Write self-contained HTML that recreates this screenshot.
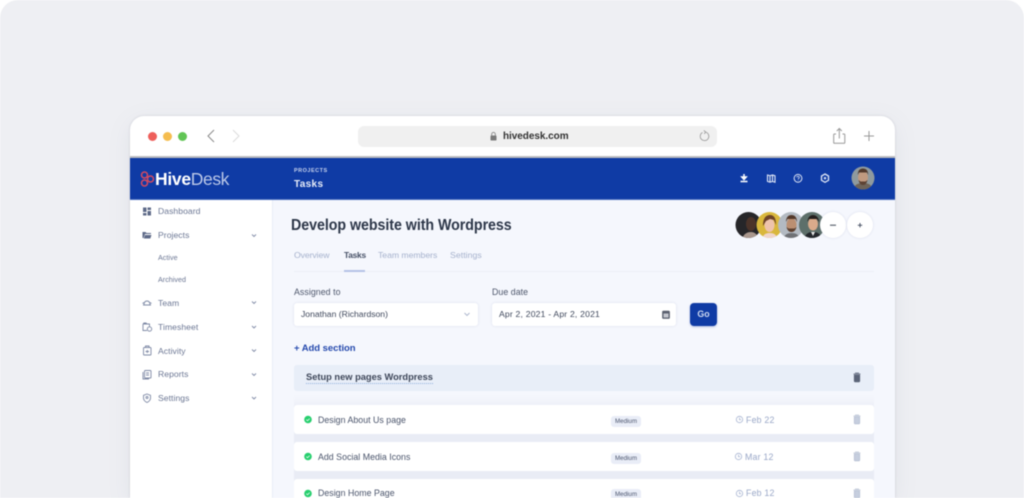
<!DOCTYPE html>
<html><head><meta charset="utf-8">
<style>
*{box-sizing:border-box}
html,body{margin:0;padding:0;width:1024px;height:498px;overflow:hidden;background:#fff}
body{font-family:"Liberation Sans",sans-serif;position:relative}
#wrap{position:absolute;left:0;top:0;width:1024px;height:498px;overflow:hidden;filter:blur(.4px)}
.a{position:absolute;white-space:nowrap}
#bg{left:0;top:0;width:1024px;height:498px;background:#eeeff3;border-radius:18px 18px 0 0}
#win{left:130px;top:116px;width:765px;height:382px;background:#fff;border-radius:14px 14px 0 0;box-shadow:0 0 2px rgba(90,90,110,.22),0 6px 24px rgba(120,125,150,.1);overflow:hidden}
.t{line-height:12px;transform:translateY(-50%)}
.side{font-size:8.6px;color:#6c7794;letter-spacing:.05px}
.sub{font-size:7.2px;color:#6c7794}
.tab{font-size:8.7px;color:#a6b2cd;letter-spacing:0}
.row{left:294px;width:580px;background:#fff;border-radius:3px}
.rt{font-size:8.8px;color:#4a546b;letter-spacing:.02px}
.badge{left:611px;width:30px;background:#e9edf7;border-radius:3px;font-size:6.2px;color:#4d5770;text-align:center;line-height:11px;overflow:hidden}
.date{font-size:8.8px;color:#9aa8c8;letter-spacing:.2px}
.inp{top:303px;width:184px;height:23px;background:#fff;border-radius:3px;box-shadow:0 0 2px rgba(130,140,180,.25);font-size:8.6px;color:#3f485c;line-height:23px;padding-left:7px;letter-spacing:.2px}
svg{position:absolute;overflow:hidden}
</style></head><body>
<div id="wrap">
<div class="a" id="bg"></div>
<div class="a" id="win"></div>

<!-- browser chrome -->
<div class="a" style="left:147.500px;top:131.500px;width:9px;height:9px;border-radius:50%;background:#ee5f5b"></div>
<div class="a" style="left:162.500px;top:131.500px;width:9px;height:9px;border-radius:50%;background:#f5bd4f"></div>
<div class="a" style="left:177.500px;top:131.500px;width:9px;height:9px;border-radius:50%;background:#61c555"></div>
<svg style="left:0;top:0" width="1024" height="498" fill="none">
<path d="M214 130l-6 6 6 6" stroke="#8a8a8a" stroke-width="1"/>
<path d="M233 130l6 6-6 6" stroke="#dcdcdc" stroke-width="1"/>
<path d="M836 134h-1.500a.8 .8 0 0 0-.8 .8v7.700a.8 .8 0 0 0 .8 .8h9.500a.8 .8 0 0 0 .8-.8v-7.700a.8 .8 0 0 0-.8-.8h-1.500M839.300 138.500v-9.500M836.800 131l2.500-2.500 2.500 2.500" stroke="#999" stroke-width="1"/>
<path d="M869 131v10M864 136h10" stroke="#999" stroke-width="1"/>
</svg>
<div class="a" style="left:358px;top:126px;width:359px;height:21px;background:#f0f0f0;border-radius:6px"></div>
<svg style="left:0;top:0" width="1024" height="498" fill="none">
<path d="M702.500 132.500a4.300 4.300 0 1 0 3 -.4M703.800 130.500l2 1.500-1.600 1.800" stroke="#979797" stroke-width=".8"/>
<rect x="490.500" y="135.500" width="6" height="5" rx=".8" fill="#7a7a7a"/>
<path d="M491.700 135.500v-1.300a1.800 1.800 0 0 1 3.600 0v1.300" stroke="#7a7a7a" stroke-width=".8"/>
</svg>
<div class="a t" style="left:503px;top:137px;font-size:10px;font-weight:700;color:#333;letter-spacing:-.05px">hivedesk.com</div>

<!-- header -->
<div class="a" style="left:130px;top:156px;width:765px;height:2px;background:#bdbdc0"></div>
<div class="a" style="left:130px;top:158px;width:765px;height:42px;background:#0f3ba5"></div>
<div class="a" style="left:130px;top:199px;width:765px;height:1px;background:#4a6fc0"></div>
<svg style="left:0;top:0" width="1024" height="498" fill="none">
<g stroke="#d84a5f" stroke-width="1.500"><circle cx="144.500" cy="175" r="3"/><circle cx="144.500" cy="183" r="3"/><circle cx="150.500" cy="179" r="3"/></g>
</svg>
<div class="a t" style="left:155px;top:179px;font-size:17.500px;font-weight:700;color:#fff;letter-spacing:-.3px;line-height:20px">Hive<span style="font-weight:400;color:#bcc9e8;letter-spacing:-.4px">Desk</span></div>
<div class="a t" style="left:294px;top:170.500px;font-size:5.500px;font-weight:700;color:#c9d4ee;letter-spacing:.5px">PROJECTS</div>
<div class="a t" style="left:294px;top:184.500px;font-size:10px;font-weight:700;color:#e8edf8;letter-spacing:.35px">Tasks</div>
<svg style="left:0;top:0" width="1024" height="498" fill="none">
<path d="M744 174v4M741.800 177h4.400L744 179.500zM740.500 181.500h7" stroke="#fff" stroke-width="1.500"/>
<path d="M767.500 175l2.500 .8 2.500-.8 2.500 .8v6.400l-2.500-.8-2.500 .8-2.500-.8zM770 175.800v6.400M772.500 175v6.400" stroke="#dfe6f6" stroke-width="1.100"/>
<circle cx="798" cy="178.300" r="3.900" stroke="#dfe6f6" stroke-width="1"/>
<path d="M796.800 177.300a1.200 1.200 0 1 1 1.500 1.300v.6M798.200 180v.5" stroke="#dfe6f6" stroke-width=".8"/>
<path d="M825 174l3.500 2v4.300l-3.500 2-3.500-2V176z" stroke="#dfe6f6" stroke-width="1.300"/>
<circle cx="825" cy="178.200" r="1.200" fill="#dfe6f6"/>
<!-- header avatar -->
<circle cx="863" cy="178" r="11.500" fill="#8f9a9e"/>
<path d="M855 186.300c1-2.500 4-3 8-3s7 .5 8 3a11.500 11.500 0 0 1-16 0z" fill="#6e6459"/>
<ellipse cx="863" cy="177.500" rx="5" ry="6.500" fill="#c09a80"/>
<path d="M857.800 175c0-5 2.500-6.500 5.200-6.500s5.200 1.500 5.200 6.500l-1.200-2.500h-8z" fill="#51392c"/>
<path d="M858.500 180c1 4 2.500 5 4.500 5s3.500-1 4.500-5l-2 1.500h-5z" fill="#5d4334"/>
</svg>

<!-- sidebar + content -->
<div class="a" style="left:130px;top:200px;width:142px;height:298px;background:#fff"></div>
<div class="a" style="left:272px;top:200px;width:1px;height:298px;background:#e9edf7"></div>
<div class="a" style="left:273px;top:200px;width:622px;height:298px;background:#f5f7fd"></div>

<svg style="left:0;top:0" width="1024" height="498" fill="none">
<g fill="#5e6a88">
<rect x="143" y="207.500" width="3.500" height="4.500"/><rect x="147.500" y="207.500" width="3.500" height="2.500"/><rect x="143" y="213" width="3.500" height="2.500"/><rect x="147.500" y="211" width="3.500" height="4.500"/>
<path d="M142.500 232h3l1 1h4.500v1h-6l-1.500 4h-1zM145 235h6.500l-1.200 3.500h-6.500z"/>
</g>
<g stroke="#7f8aa6" stroke-width=".9">
<path d="M143 305h8M144 305c0-3 1.500-4 3-4s3 1 3 4M142.500 303.500l1.500-1M151.500 303.500l-1.500-1"/>
<path d="M143 324h6.500v2.500M143 324v6.500h4M143 324l1-1h2l1 1"/><circle cx="149.500" cy="329" r="2.200"/>
<rect x="143.500" y="347.500" width="7.500" height="7.500" rx=".8"/><path d="M145.500 347.500v-1.500h3.500v1.500M145.500 351.500h3.500M147.300 350v3"/>
<rect x="144.500" y="370.500" width="6.500" height="7.500" rx=".8"/><path d="M143 372v7h6M146 373h3M146 375h3"/>
<path d="M147 394l3.500 1.300v2.700c0 2-1.500 3.500-3.500 4.500-2-1-3.500-2.500-3.500-4.500v-2.700z"/><circle cx="147" cy="397.500" r="1"/>
</g>
<g stroke="#7f8aa6" stroke-width=".9">
<path d="M252 234.500l2 2 2-2M252 301.500l2 2 2-2M252 326l2 2 2-2M252 349.500l2 2 2-2M252 373.500l2 2 2-2M252 397l2 2 2-2"/>
</g>
</svg>
<div class="a t side" style="left:158px;top:211px">Dashboard</div>
<div class="a t side" style="left:158px;top:235px">Projects</div>
<div class="a t sub" style="left:158px;top:258px">Active</div>
<div class="a t sub" style="left:158px;top:280px">Archived</div>
<div class="a t side" style="left:158px;top:302.500px">Team</div>
<div class="a t side" style="left:158px;top:326.500px">Timesheet</div>
<div class="a t side" style="left:158px;top:350.500px">Activity</div>
<div class="a t side" style="left:158px;top:374px">Reports</div>
<div class="a t side" style="left:158px;top:397.500px">Settings</div>

<!-- title -->
<div class="a" style="left:291px;top:215.500px;font-size:15.600px;font-weight:700;color:#2c3648;line-height:20px;letter-spacing:-.05px;transform:scaleX(.913);transform-origin:left center">Develop website with Wordpress</div>

<!-- avatars -->
<svg style="left:0;top:0" width="1024" height="498">
<defs>
<clipPath id="c1"><circle cx="748.500" cy="225" r="13"/></clipPath>
<clipPath id="c2"><circle cx="769.500" cy="225" r="13"/></clipPath>
<clipPath id="c3"><circle cx="791" cy="225" r="13"/></clipPath>
<clipPath id="c4"><circle cx="812" cy="225" r="13"/></clipPath>
</defs>
<g clip-path="url(#c1)"><rect x="735" y="211" width="28" height="28" fill="#262629"/><ellipse cx="751" cy="224" rx="5" ry="7" fill="#4b3329"/><path d="M742 240c1-6 5-8 9-8s7 3 8 8z" fill="#a9978d"/></g>
<g clip-path="url(#c2)"><rect x="756" y="211" width="28" height="28" fill="#d9b73c"/><ellipse cx="769.500" cy="225" rx="5" ry="7" fill="#eec3ac"/><path d="M763 226c0-8 3-11 7-11s6 3 6 10l-2-5-4-1-4 2z" fill="#6d4327"/><path d="M762 240c1-6 4-7 8-7s7 2 8 7z" fill="#f0d5cb"/></g>
<g clip-path="url(#c3)"><rect x="778" y="211" width="28" height="28" fill="#b3bac2"/><ellipse cx="791.500" cy="225" rx="5" ry="7" fill="#bb8f72"/><path d="M786 222c0-5 2.500-7 5.500-7s5.500 2 5.500 7l-1.500-3h-8z" fill="#54392a"/><path d="M786.500 227c1 4 3 5 5 5s4-1 5-5l-2 1.500h-6z" fill="#5d4131"/><path d="M783 240c1-5 4-7 8.500-7s8 2 8.500 7z" fill="#6f7175"/></g>
<g clip-path="url(#c4)"><rect x="799" y="211" width="28" height="28" fill="#5d6f6a"/><ellipse cx="813" cy="224" rx="5" ry="6.500" fill="#d9aa8b"/><path d="M807.500 222c0-5 3-7 5.500-7s6 2 6 7l-2-3h-8z" fill="#25201e"/><path d="M804 240c1-6 4-8 9-8s8 2 9 8z" fill="#24272c"/><path d="M811 232h4l-2 4z" fill="#e8e8e8"/></g>
</svg>
<div class="a" style="left:820px;top:212px;width:26px;height:26px;border-radius:50%;background:#fff;box-shadow:0 0 2px rgba(130,140,180,.25)"></div>
<div class="a" style="left:847px;top:212px;width:26px;height:26px;border-radius:50%;background:#fff;box-shadow:0 0 2px rgba(130,140,180,.25)"></div>
<svg style="left:0;top:0" width="1024" height="498" fill="none">
<path d="M830 225.200h6" stroke="#5d6470" stroke-width="1.200"/>
<path d="M860 223v4.400M857.800 225.200h4.400" stroke="#4c5568" stroke-width="1"/>
</svg>

<!-- tabs -->
<div class="a t tab" style="left:294px;top:255px;letter-spacing:-.1px">Overview</div>
<div class="a t tab" style="left:344px;top:255px;color:#465066;font-weight:700;font-size:8.400px;letter-spacing:-.25px">Tasks</div>
<div class="a t tab" style="left:378px;top:255px;letter-spacing:-.05px">Team members</div>
<div class="a t tab" style="left:450px;top:255px;letter-spacing:.05px">Settings</div>
<div class="a" style="left:294px;top:271px;width:580px;height:1px;background:#eceff7"></div>
<div class="a" style="left:344px;top:270px;width:21px;height:1.500px;background:#b4c2e6"></div>

<!-- filters -->
<div class="a t" style="left:294px;top:292px;font-size:8.800px;color:#4d566b;letter-spacing:.05px">Assigned to</div>
<div class="a t" style="left:492px;top:292px;font-size:8.800px;color:#4d566b;letter-spacing:.05px">Due date</div>
<div class="a inp" style="left:294px;letter-spacing:0">Jonathan (Richardson)</div>
<div class="a inp" style="left:492px">Apr 2, 2021 - Apr 2, 2021</div>
<svg style="left:0;top:0" width="1024" height="498" fill="none">
<path d="M464.500 313l2.500 2.500 2.500-2.500" stroke="#aab4cc" stroke-width=".9"/>
<rect x="662.500" y="311" width="7" height="7.500" rx=".8" fill="#5b6170" stroke="#4b5160" stroke-width=".6"/>
<rect x="663.500" y="313.500" width="5" height="4" fill="#c4c7ce"/>
</svg>
<div class="a" style="left:690px;top:303px;width:27px;height:23px;background:#0f3ba5;border-radius:4px;color:#cfdaf2;font-size:8.800px;font-weight:700;line-height:23px;text-align:center;box-shadow:0 1px 2px rgba(30,60,160,.3)">Go</div>
<div class="a t" style="left:294px;top:349px;font-size:9.500px;font-weight:700;color:#2549ad;letter-spacing:-.05px">+ Add section</div>

<!-- section -->
<div class="a" style="left:294px;top:356px;width:580px;height:142px;background:linear-gradient(#f5f7fd 0,#f5f7fd 38px,#f1f3fa 46px,#eaedf6 52px,#e9ecf5 100%)"></div>
<div class="a" style="left:294px;top:365px;width:580px;height:26px;background:#e8eef8;border-radius:3px"></div>
<div class="a" style="left:306px;top:371px;font-size:9.300px;font-weight:700;color:#3d4659;letter-spacing:0;border-bottom:1px dotted #8fb0dc;line-height:12px">Setup new pages Wordpress</div>

<!-- rows -->
<div class="a row" style="top:405px;height:29px"></div>
<div class="a row" style="top:442px;height:29px"></div>
<div class="a row" style="top:479px;height:19px;border-radius:3px 3px 0 0"></div>
<div class="a rt" style="left:318px;top:414px;line-height:12px">Design About Us page</div>
<div class="a rt" style="left:318px;top:451px;line-height:12px">Add Social Media Icons</div>
<div class="a rt" style="left:318px;top:486px;line-height:12px;height:12px;overflow:hidden;padding-top:1px">Design Home Page</div>
<div class="a badge" style="top:415.500px;height:11px">Medium</div>
<div class="a badge" style="top:452.500px;height:11px">Medium</div>
<div class="a badge" style="top:489px;height:9px;border-radius:3px 3px 0 0">Medium</div>
<div class="a date" style="left:746px;top:414px;line-height:12px">Feb 22</div>
<div class="a date" style="left:745px;top:451px;line-height:12px">Mar 12</div>
<div class="a date" style="left:746px;top:486px;line-height:12px;height:12px;overflow:hidden;padding-top:1px">Feb 12</div>

<svg style="left:0;top:0" width="1024" height="498" fill="none">
<circle cx="308" cy="419.500" r="3.800" fill="#27cf6e"/><path d="M306.300 419.600l1.200 1.200 2.200-2.200" stroke="#fff" stroke-width=".7"/>
<circle cx="308" cy="456.500" r="3.800" fill="#27cf6e"/><path d="M306.300 456.600l1.200 1.200 2.200-2.200" stroke="#fff" stroke-width=".7"/>
<circle cx="308" cy="493.500" r="3.800" fill="#27cf6e"/><path d="M306.300 493.600l1.200 1.200 2.200-2.200" stroke="#fff" stroke-width=".7"/>
<g stroke="#a8b5d2" stroke-width=".8">
<circle cx="739.500" cy="419.500" r="3.200"/><path d="M739.500 417.700v2h1.500"/>
<circle cx="738.500" cy="456.500" r="3.200"/><path d="M738.500 454.700v2h1.500"/>
<circle cx="739.500" cy="493.500" r="3.200"/><path d="M739.500 491.700v2h1.500"/>
</g>
<path d="M853.500 374h7M855 373h4M854.300 375v6a.8 .8 0 0 0 .8 .8h3.800a.8 .8 0 0 0 .8-.8v-6z" fill="#5b6478" stroke="#5b6478" stroke-width=".8"/>
<g fill="#c6cede" stroke="#b8c1d4" stroke-width=".8">
<path d="M853.500 416h7M855 415h4M854.300 417v6a.8 .8 0 0 0 .8 .8h3.800a.8 .8 0 0 0 .8-.8v-6z"/>
<path d="M853.500 453h7M855 452h4M854.300 454v6a.8 .8 0 0 0 .8 .8h3.800a.8 .8 0 0 0 .8-.8v-6z"/>
<path d="M853.500 490h7M855 489h4M854.300 491v6a.8 .8 0 0 0 .8 .8h3.800a.8 .8 0 0 0 .8-.8v-6z"/>
</g>
</svg>
</div>
</body></html>
